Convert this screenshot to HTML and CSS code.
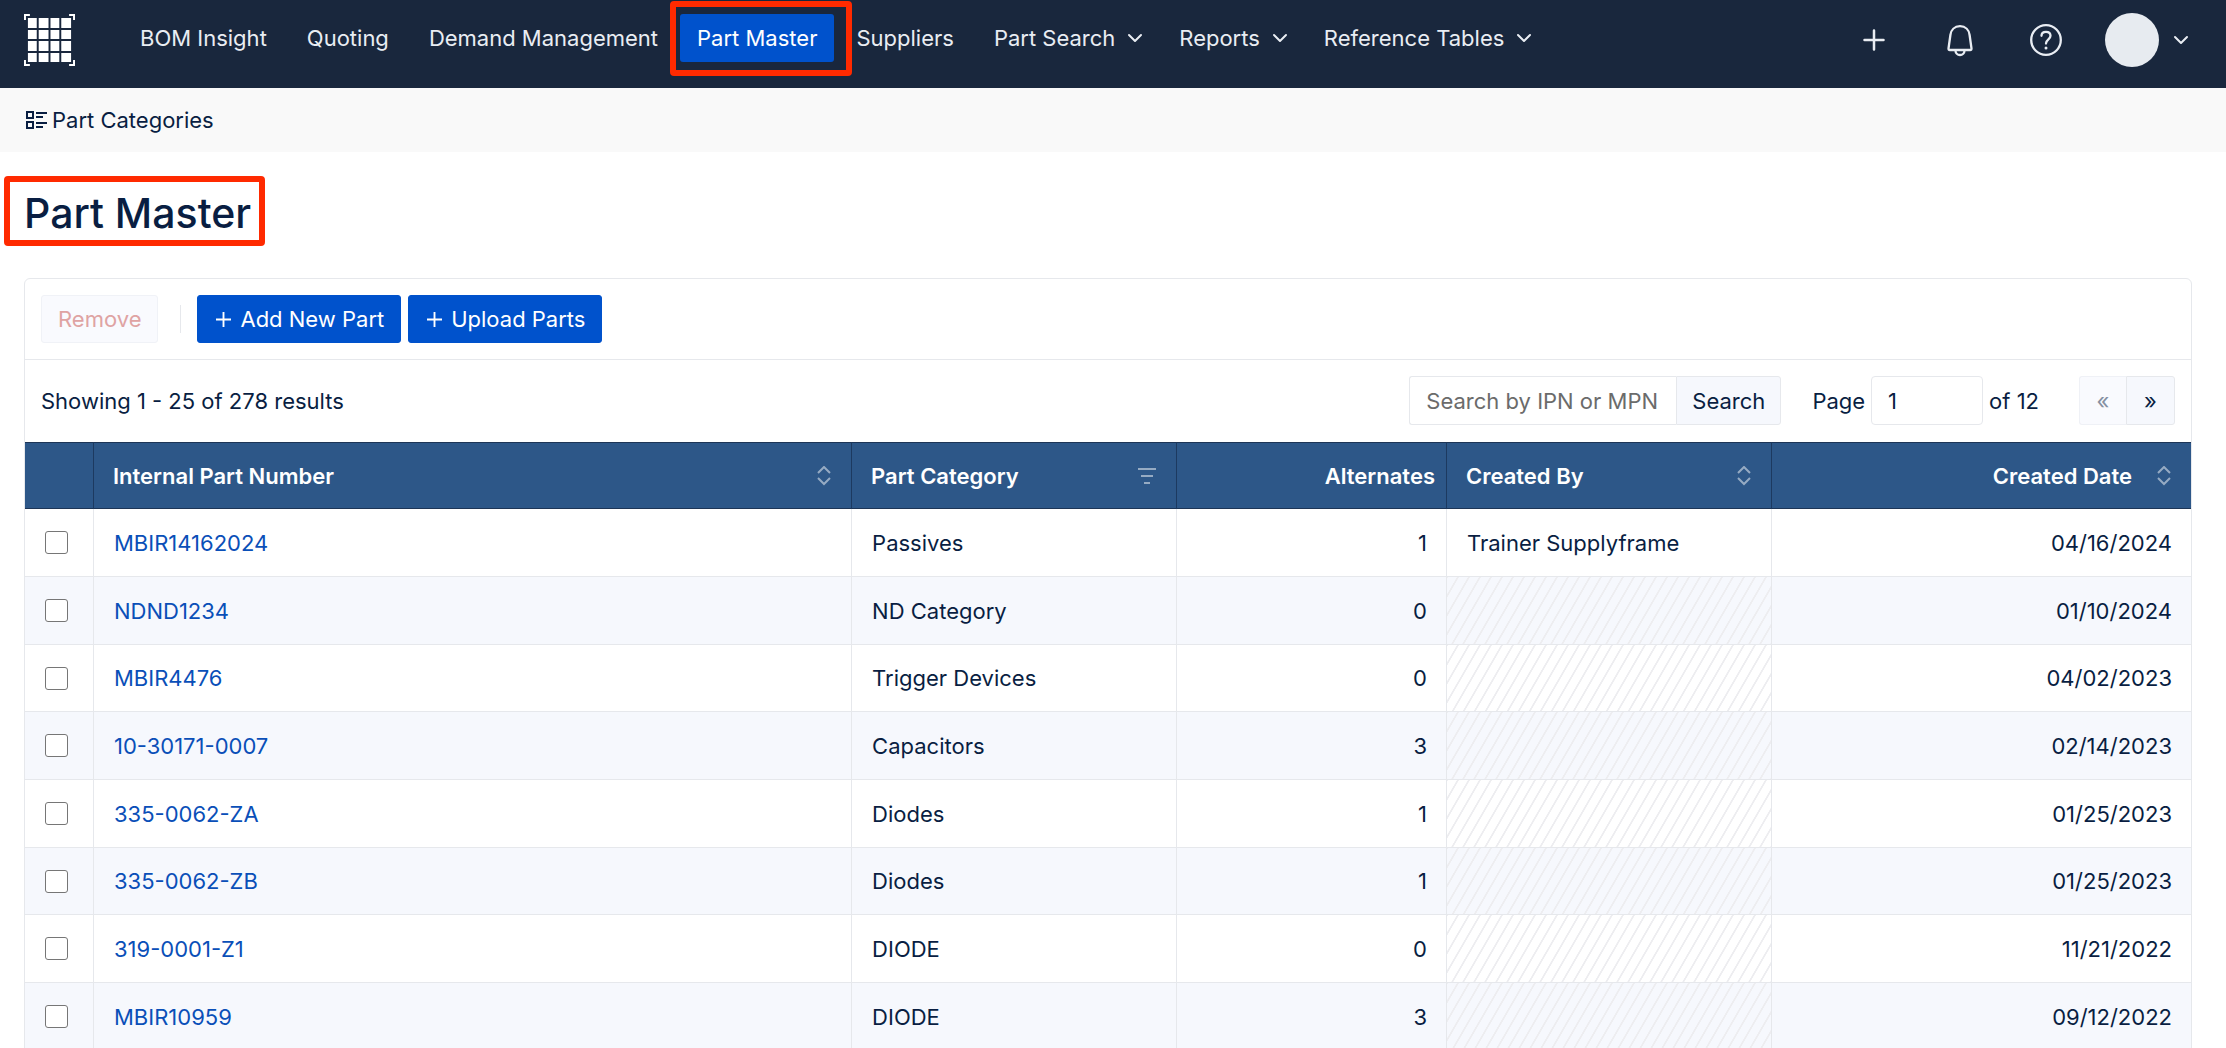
FILE: index.html
```html
<!DOCTYPE html>
<html lang="en">
<head>
<meta charset="UTF-8">
<meta name="viewport" content="width=device-width, initial-scale=1.0">
<title>Part Master</title>
<link rel="stylesheet" href="styles.css">
</head>
<body>

<!-- shared icons -->
<svg width="0" height="0" class="icon-defs" aria-hidden="true">
    <symbol id="chevron" viewBox="0 0 16 10">
        <path d="M2 2l6 6 6-6" fill="none" stroke="currentColor" stroke-width="2" stroke-linecap="round" stroke-linejoin="round"/>
    </symbol>
    <symbol id="sort" viewBox="0 0 14 20">
        <path d="M1 7l6-6 6 6M1 12l6 6 6-6" fill="none" stroke="currentColor" stroke-width="2"/>
    </symbol>
    <symbol id="plus" viewBox="0 0 16 16">
        <path d="M8 0v16M0 8h16" fill="none" stroke="currentColor" stroke-width="2"/>
    </symbol>
</svg>

<header class="header">
    <a href="#" class="logo" aria-label="Home">
        <svg width="51" height="52" viewBox="0 0 52 52" preserveAspectRatio="none" fill="#fff">
            <path d="M0 0h6v2H2v4H0zM46 0h6v6h-2V2h-4zM0 46h2v4h4v2H0zM50 46h2v6h-6v-2h4z"/>
            <path d="M4 4h9v10H4zM15 4h10v10H15zM27 4h9v10h-9zM38 4h10v10H38z"/>
            <path d="M4 16h9v9H4zM15 16h10v9H15zM27 16h9v9h-9zM38 16h10v9H38z"/>
            <path d="M4 27h9v10H4zM15 27h10v10H15zM27 27h9v10h-9zM38 27h10v10H38z"/>
            <path d="M4 39h9v9H4zM15 39h10v9H15zM27 39h9v9h-9zM38 39h10v9H38z"/>
        </svg>
    </a>
    <nav class="nav">
        <a href="#">BOM Insight</a>
        <a href="#">Quoting</a>
        <a href="#">Demand Management</a>
        <a href="#" class="active">Part Master</a>
        <a href="#">Suppliers</a>
        <a href="#">Part Search <svg class="chevron"><use href="#chevron"/></svg></a>
        <a href="#">Reports <svg class="chevron"><use href="#chevron"/></svg></a>
        <a href="#">Reference Tables <svg class="chevron"><use href="#chevron"/></svg></a>
    </nav>
    <div class="header-tools">
        <button type="button" aria-label="Add">
            <svg width="34" height="34" viewBox="0 0 34 34" fill="none" stroke="currentColor" stroke-width="2.500" stroke-linecap="round">
                <path d="M17 7.500v19M7.500 17h19"/>
            </svg>
        </button>
        <button type="button" aria-label="Notifications">
            <svg width="34" height="34" viewBox="0 0 34 34" fill="none" stroke="currentColor" stroke-width="2.300" stroke-linejoin="round">
                <path d="M17 3.200C11.500 3.200 8 7 7.400 12L5.500 25.500Q5.400 27 6.800 27h20.400q1.400 0 1.300-1.500L26.600 12C26 7 22.500 3.200 17 3.200z"/>
                <path d="M12.500 27.500a4.500 4.500 0 0 0 9 0"/>
            </svg>
        </button>
        <button type="button" aria-label="Help">
            <svg width="34" height="34" viewBox="0 0 34 34" fill="none" stroke="currentColor" stroke-width="2.300" stroke-linecap="round">
                <circle cx="17" cy="17" r="14.800"/>
                <path d="M12.500 12.800c0-2.500 2-4 4.500-4s4.500 1.500 4.500 4c0 3.500-4.500 3.500-4.500 7.700"/>
                <circle cx="17" cy="25" r="1.500" fill="currentColor" stroke="none"/>
            </svg>
        </button>
        <button type="button" class="account" aria-label="Account">
            <span class="avatar"></span>
            <svg class="chevron"><use href="#chevron"/></svg>
        </button>
    </div>
</header>

<div class="subbar">
    <a href="#">
        <svg width="21" height="18" viewBox="0 0 21 18" fill="none" stroke="currentColor" stroke-width="2">
            <path d="M1 1h6v6H1zM1 11h6v6H1zM10 2h11M10 6h7M10 12h11M10 16h7"/>
        </svg>
        Part Categories
    </a>
</div>

<main class="main">
    <h1>Part Master</h1>

    <div class="card">
        <div class="toolbar">
            <button type="button" class="btn" disabled>Remove</button>
            <span class="divider"></span>
            <button type="button" class="btn primary"><svg class="plus"><use href="#plus"/></svg>Add New Part</button>
            <button type="button" class="btn primary"><svg class="plus"><use href="#plus"/></svg>Upload Parts</button>
        </div>

        <div class="filters">
            <span class="results">Showing 1 - 25 of 278 results</span>
            <form class="search">
                <input type="text" placeholder="Search by IPN or MPN" aria-label="Search by IPN or MPN">
                <button type="button">Search</button>
            </form>
            <div class="page">
                <label for="page">Page</label>
                <input type="text" id="page" value="1">
                <span>of 12</span>
            </div>
            <div class="pager">
                <button type="button" aria-label="Previous page" disabled>«</button>
                <button type="button" aria-label="Next page">»</button>
            </div>
        </div>

        <table>
            <thead>
                <tr>
                    <th class="col-check"></th>
                    <th class="col-ipn"><div>Internal Part Number <svg class="sort"><use href="#sort"/></svg></div></th>
                    <th class="col-category"><div>Part Category
                        <svg class="filter" viewBox="0 0 18 16"><path d="M0 1h18M3 8h12M6 15h6" fill="none" stroke="currentColor" stroke-width="2"/></svg></div></th>
                    <th class="col-alternates">Alternates</th>
                    <th class="col-by"><div>Created By <svg class="sort"><use href="#sort"/></svg></div></th>
                    <th class="col-date"><div>Created Date <svg class="sort"><use href="#sort"/></svg></div></th>
                </tr>
            </thead>
            <tbody>
                <tr>
                    <td><input type="checkbox" aria-label="Select MBIR14162024"></td>
                    <td><a href="#">MBIR14162024</a></td>
                    <td>Passives</td>
                    <td class="num">1</td>
                    <td>Trainer Supplyframe</td>
                    <td class="num">04/16/2024</td>
                </tr>
                <tr>
                    <td><input type="checkbox" aria-label="Select NDND1234"></td>
                    <td><a href="#">NDND1234</a></td>
                    <td>ND Category</td>
                    <td class="num">0</td>
                    <td class="empty"></td>
                    <td class="num">01/10/2024</td>
                </tr>
                <tr>
                    <td><input type="checkbox" aria-label="Select MBIR4476"></td>
                    <td><a href="#">MBIR4476</a></td>
                    <td>Trigger Devices</td>
                    <td class="num">0</td>
                    <td class="empty"></td>
                    <td class="num">04/02/2023</td>
                </tr>
                <tr>
                    <td><input type="checkbox" aria-label="Select 10-30171-0007"></td>
                    <td><a href="#">10-30171-0007</a></td>
                    <td>Capacitors</td>
                    <td class="num">3</td>
                    <td class="empty"></td>
                    <td class="num">02/14/2023</td>
                </tr>
                <tr>
                    <td><input type="checkbox" aria-label="Select 335-0062-ZA"></td>
                    <td><a href="#">335-0062-ZA</a></td>
                    <td>Diodes</td>
                    <td class="num">1</td>
                    <td class="empty"></td>
                    <td class="num">01/25/2023</td>
                </tr>
                <tr>
                    <td><input type="checkbox" aria-label="Select 335-0062-ZB"></td>
                    <td><a href="#">335-0062-ZB</a></td>
                    <td>Diodes</td>
                    <td class="num">1</td>
                    <td class="empty"></td>
                    <td class="num">01/25/2023</td>
                </tr>
                <tr>
                    <td><input type="checkbox" aria-label="Select 319-0001-Z1"></td>
                    <td><a href="#">319-0001-Z1</a></td>
                    <td>DIODE</td>
                    <td class="num">0</td>
                    <td class="empty"></td>
                    <td class="num">11/21/2022</td>
                </tr>
                <tr>
                    <td><input type="checkbox" aria-label="Select MBIR10959"></td>
                    <td><a href="#">MBIR10959</a></td>
                    <td>DIODE</td>
                    <td class="num">3</td>
                    <td class="empty"></td>
                    <td class="num">09/12/2022</td>
                </tr>
            </tbody>
        </table>
    </div>
</main>

</body>
</html>
```
FILE: styles.css
```css
* {
    box-sizing: border-box;
}

html {
    scrollbar-width: none;
}

body {
    margin: 0;
    font-family: Inter, sans-serif;
    font-size: 22px;
    line-height: 32px;
    color: #091e42;
    background-color: #fff;
}

button, input {
    font: inherit;
    color: inherit;
}

a {
    color: #0a4fb8;
    text-decoration: none;
}

svg {
    display: block;
    flex: none;
}

.icon-defs {
    position: absolute;
}

.chevron {
    width: 16px;
    height: 10px;
}

/* header */
.header {
    display: flex;
    align-items: flex-start;
    height: 88px;
    padding: 14px 37px 0 24px;
    background-color: #19273d;
    color: #e9edf3;
}

.nav {
    display: flex;
    gap: 4px;
    margin-left: 47px;
}

.nav a {
    display: flex;
    align-items: center;
    gap: 12px;
    height: 48px;
    padding: 0 18px;
    border-radius: 3px;
    color: #e9edf3;
    white-space: nowrap;
}

.nav .chevron {
    margin-right: -4px;
}

.nav .active {
    position: relative;
    padding: 0 17px;
    background-color: #0052cc;
    color: #fff;
}

/* red callouts */
.nav .active::after,
h1::after {
    content: "";
    position: absolute;
    border: 6px solid #ff2a00;
    border-radius: 4px;
}

.nav .active::after {
    inset: -13px -18px -14px -10px;
}

.header-tools {
    display: flex;
    align-items: center;
    gap: 52px;
    height: 52px;
    margin-left: auto;
}

.header-tools button {
    display: flex;
    align-items: center;
    padding: 0;
    border: 0;
    background: none;
    color: inherit;
}

.header-tools .account {
    gap: 14px;
    margin-left: -10px;
}

.avatar {
    width: 54px;
    height: 54px;
    border-radius: 50%;
    background-color: #e7ebf0;
}

.subbar {
    display: flex;
    padding: 16px 24px;
    background-color: #f9f9f9;
}

.subbar a {
    display: flex;
    align-items: center;
    gap: 5px;
    padding-left: 2px;
    color: #091e42;
}

/* content */
.main {
    padding: 33px 34px 0 24px;
}

h1 {
    position: relative;
    width: fit-content;
    margin: 0 0 37px;
    font-size: 41px;
    line-height: 56px;
    font-weight: 500;
}

h1::after {
    inset: -9px -14px -5px -20px;
}

.card {
    border: 1px solid #e6e8ec;
    border-radius: 6px 6px 0 0;
}

.toolbar {
    display: flex;
    align-items: center;
    padding: 16px;
    border-bottom: 1px solid #e6e8ec;
}

.btn {
    display: flex;
    align-items: center;
    gap: 9px;
    height: 48px;
    padding: 0 16px;
    border: 1px solid #f0f2f7;
    border-radius: 3px;
    background-color: #f9fafe;
}

.btn:disabled {
    color: #dfa3a3;
}

.btn.primary {
    margin-right: 7px;
    border-color: #0052cc;
    background-color: #0052cc;
    color: #fff;
}

.plus {
    width: 15px;
    height: 15px;
    margin-left: 2px;
}

.divider {
    width: 1px;
    height: 28px;
    margin: 0 16px 0 22px;
    background-color: #e6e8ec;
}

.filters {
    display: flex;
    align-items: center;
    padding: 16px 16px 17px;
}

.results {
    margin-right: auto;
}

.filters input,
.filters button {
    height: 49px;
    border: 1px solid #e6e8ec;
}

.filters input {
    padding: 0 16px;
    background-color: #fff;
}

.filters button {
    padding: 0 15px;
    background-color: #f6f8fd;
}

.search {
    display: flex;
}

.search input {
    width: 267px;
    border-right: 0;
    border-radius: 3px 0 0 3px;
}

.search input::placeholder {
    color: #6b6b6b;
}

.search button {
    border-radius: 0 3px 3px 0;
}

.page {
    display: flex;
    align-items: center;
    gap: 6px;
    margin: 0 40px 0 31px;
}

.page input {
    width: 112px;
    border-radius: 4px;
}

.pager {
    display: flex;
}

.pager button {
    width: 49px;
    padding: 0;
    border-radius: 0 3px 3px 0;
}

.pager button:disabled {
    width: 47px;
    border-color: #eff1f6;
    border-right: 0;
    border-radius: 3px 0 0 3px;
    background-color: #f9fafe;
    color: #8590a2;
}

/* parts table */
table {
    width: 100%;
    table-layout: fixed;
    border-collapse: separate;
    border-spacing: 0;
}

th {
    height: 67px;
    padding: 0 20px 0 19px;
    border-top: 1px solid #1d3556;
    border-bottom: 1px solid #1d3556;
    border-right: 1px solid #1d3a60;
    background-color: #2d5788;
    color: #fff;
    font-weight: 600;
    text-align: left;
}

th div {
    display: flex;
    align-items: center;
    justify-content: space-between;
}

th svg {
    color: #96abc3;
}

.sort {
    width: 14px;
    height: 20px;
}

.filter {
    width: 18px;
    height: 16px;
}

.col-check {
    width: 69px;
}

.col-ipn {
    width: 35%;
}

.col-category,
.col-by {
    width: 15%;
}

.col-alternates {
    width: 270px;
    padding-right: 11px;
    text-align: right;
}

.col-date div {
    justify-content: flex-end;
    gap: 25px;
}

td {
    height: 68px;
    padding: 0 20px;
    border-right: 1px solid #e6e8ec;
    border-bottom: 1px solid #e6e8ec;
}

tr:nth-child(3n) td {
    height: 67px;
}

th:last-child,
td:last-child {
    border-right: 0;
}

tbody tr:nth-child(even) {
    background-color: #f6f8fd;
}

.num {
    padding-right: 19px;
    text-align: right;
}

.empty {
    background-image: repeating-linear-gradient(120deg, #ededf0 0 3%, transparent 6% 44%, #ededf0 47% 50%);
    background-size: 11px 19px;
}

td input {
    display: block;
    appearance: none;
    width: 23px;
    height: 23px;
    margin: 0;
    border: 1px solid #767676;
    border-radius: 3px;
    background-color: #fff;
}
```
